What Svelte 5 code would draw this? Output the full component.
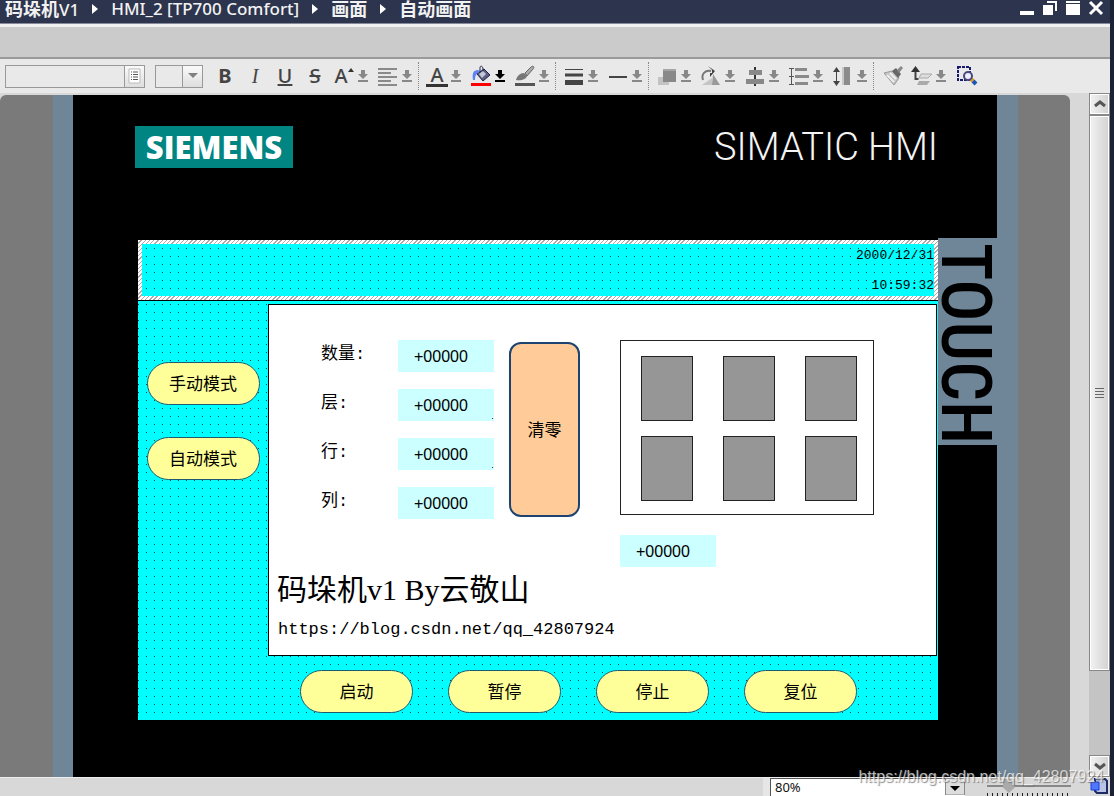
<script>
	const crumbs = [
		{ cjk: '码垛机', latin: 'V1' },
		{ cjk: '', latin: 'HMI_2 [TP700 Comfort]' },
		{ cjk: '画面', latin: '' },
		{ cjk: '自动画面', latin: '' }
	];

	const windowButtons = ['minimize', 'restore', 'maximize', 'close'];

	const tools = [
		{ id: 'bold', title: 'Bold' },
		{ id: 'italic', title: 'Italic' },
		{ id: 'underline', title: 'Underline' },
		{ id: 'strike', title: 'Strikethrough' },
		{ id: 'fontsize', title: 'Font size', menu: true },
		{ id: 'align', title: 'Align text', menu: true },
		{ id: 'sep' },
		{ id: 'color', title: 'Text color', menu: true },
		{ id: 'fill', title: 'Background color', menu: true, active: true },
		{ id: 'pen', title: 'Border color', menu: true },
		{ id: 'sep' },
		{ id: 'weight', title: 'Line width', menu: true },
		{ id: 'line', title: 'Line style', menu: true },
		{ id: 'sep' },
		{ id: 'order', title: 'Order', menu: true },
		{ id: 'rotate', title: 'Rotate', menu: true },
		{ id: 'center', title: 'Align objects', menu: true },
		{ id: 'distribute', title: 'Distribute', menu: true },
		{ id: 'resize', title: 'Same size', menu: true },
		{ id: 'sep' },
		{ id: 'format', title: 'Copy format' },
		{ id: 'layer', title: 'Layers', menu: true },
		{ id: 'zoom', title: 'Zoom selection' }
	];

	const modes = ['手动模式', '自动模式'];
	const commands = ['启动', '暂停', '停止', '复位'];

	let counters = $state([
		{ id: 'count', label: '数量:', value: '+00000' },
		{ id: 'layer', label: '层:', value: '+00000', mark: true },
		{ id: 'row', label: '行:', value: '+00000', mark: true },
		{ id: 'column', label: '列:', value: '+00000' }
	]);
	let position = $state('+00000');
	let zoom = $state('80%');
	let zoomLevel = $state(22);

	function resetCounters() {
		counters.forEach((c) => (c.value = '+00000'));
	}
</script>

<div class="window">
	<header class="titlebar">
		<nav>
			{#each crumbs as crumb, i}
				{#if i > 0}
					<svg class="chevron" width="6" height="12" viewBox="0 0 6 12"><path d="M0 1l6 5-6 5z" fill="#fff" /></svg>
				{/if}
				<a href="#top">{#if crumb.cjk}<b>{crumb.cjk}</b>{/if}{crumb.latin}</a>
			{/each}
		</nav>
		<div class="window-buttons">
			{#each windowButtons as name}
				<button type="button" aria-label={name}>
					<svg width="16" height="16" viewBox="0 0 16 16" fill="#fff">
						{#if name === 'minimize'}
							<path d="M1 11h14v4H1z" />
						{:else if name === 'restore'}
							<path d="M1 5h10v10H1zM5 1h10v10h-2V3H5z" />
						{:else if name === 'maximize'}
							<path d="M1 1h14v2H1zM1 4h14v11H1z" />
						{:else}
							<path d="M2 2l12 12M14 2L2 14" stroke="#fff" stroke-width="3" />
						{/if}
					</svg>
				</button>
			{/each}
		</div>
	</header>

	<div class="band"></div>

	<div class="toolbar">
		<div class="combo font-name">
			<input type="text" aria-label="Font" />
			<button type="button" aria-label="Choose font">
				<svg width="14" height="16" viewBox="0 0 14 16">
					<path d="M1 1h11v14H1z" fill="#fff" stroke="#bbb" />
					<path d="M3 4h1M3 6.500h1M3 9h1M3 11.500h1M5 4h5M5 6.500h5M5 9h5M5 11.500h5" stroke="#555" />
				</svg>
			</button>
		</div>
		<div class="combo font-size">
			<input type="text" aria-label="Font size" />
			<button type="button" aria-label="Choose size">
				<svg width="10" height="6" viewBox="0 0 10 6"><path d="M0 0h10L5 5z" fill="#808080" /></svg>
			</button>
		</div>

		<div class="tools">
			{#each tools as tool}
				{#if tool.id === 'sep'}
					<span class="sep"></span>
				{:else}
					<button type="button" class="tool" class:menu={tool.menu} aria-label={tool.title}>
						{#if tool.id === 'bold'}
							<span class="glyph bold">B</span>
						{:else if tool.id === 'italic'}
							<span class="glyph italic">I</span>
						{:else if tool.id === 'underline'}
							<span class="glyph underline">U</span>
						{:else if tool.id === 'strike'}
							<span class="glyph strike">S</span>
						{:else if tool.id === 'fontsize'}
							<span class="glyph">A<svg class="up" width="6" height="4" viewBox="0 0 6 4"><path d="M0 4l3-4 3 4z" fill="#333" /></svg></span>
						{:else if tool.id === 'color'}
							<span class="glyph bar">A</span>
						{:else}
							<svg width="22" height="22" viewBox="0 0 22 22" fill="none">
								{#if tool.id === 'align'}
									<path d="M1 4h19M1 8h13M1 12h19M1 16h13M1 20h19" stroke="#8a8a8a" stroke-width="2" />
								{:else if tool.id === 'fill'}
									<path d="M1 18h20v3H1z" fill="#f00" />
									<path d="M3 15C2 9 3 5 8 5l2 1c-3 2-5 4-5 9z" fill="#5b85f5" />
									<path d="M7 9l7-5 6 6-7 6z" fill="#5c5f80" stroke="#20244a" />
									<path d="M10 8V3c0-3 3-2 3 1v5" stroke="#20244a" />
									<path d="M9 9l4-3 3 3-4 4z" fill="#c5c8d8" />
								{:else if tool.id === 'pen'}
									<path d="M1 18h20v3H1z" fill="#555" />
									<path d="M2 15c1-4 4-7 8-7l3 3c-1 3-5 5-11 4z" fill="#777" />
									<path d="M11 8l6-6c2-2 4 0 2 2l-6 7z" fill="#aaa" stroke="#666" />
								{:else if tool.id === 'weight'}
									<path d="M2 4.500h18" stroke="#444" />
									<path d="M2 10h18" stroke="#444" stroke-width="3" />
									<path d="M2 17.500h18" stroke="#444" stroke-width="5" />
								{:else if tool.id === 'line'}
									<path d="M2 12h18" stroke="#444" stroke-width="2" />
								{:else if tool.id === 'order'}
									<path d="M2 12h11v8H2z" fill="#c2c2c2" />
									<path d="M7 4h13v13H7z" fill="#888" />
									<path d="M7 4h13v2H7z" fill="#a5a5a5" />
								{:else if tool.id === 'rotate'}
									<path d="M2 20l10-7v7z" fill="#c5c5c5" />
									<path d="M13 9l7 11h-8z" fill="#999" />
									<path d="M3 15C1 9 5 5 11 6" stroke="#777" stroke-width="2" />
									<path d="M8 1l7 5-5 6V8h2V5z" fill="#444" />
								{:else if tool.id === 'center'}
									<path d="M11 2v19" stroke="#333" stroke-width="2" />
									<path d="M5 5h13v5H5zM2 14h18v5H2z" fill="#888" />
								{:else if tool.id === 'distribute'}
									<path d="M3.500 3v17M1 3.500h5M1 11.500h5M1 19.500h5" stroke="#555" />
									<path d="M7 3h12v3H7zM7 10h14v3H7zM7 17h13v3H7z" fill="#8a8a8a" />
								{:else if tool.id === 'resize'}
									<path d="M4.500 5v13" stroke="#444" />
									<path d="M1 7l3.500-5L8 7zM1 16l3.500 5L8 16z" fill="#444" />
									<path d="M10 2h2v18h-2z" fill="#c8c8c8" />
									<path d="M12 2h6v18h-6z" fill="#8c8c8c" />
								{:else if tool.id === 'format'}
									<path d="M2 8l8-2 7 7-5 7z" fill="#c5c5c5" stroke="#999" />
									<path d="M5 10l7 7M8 8l6 6" stroke="#eee" stroke-width="2" />
									<path d="M10 6l4-3 5 6-3 4z" fill="#666" />
									<path d="M15 5l4-4 2 2-4 5z" fill="#888" />
								{:else if tool.id === 'layer'}
									<path d="M10 9h11l-4 4H8z" fill="#ddd" stroke="#aaa" />
									<path d="M8 16h11l-3 4H6z" fill="#aaa" />
									<path d="M4.500 5v9h3" stroke="#444" stroke-width="2" />
									<path d="M0 7l4.500-6L9 7z" fill="#333" />
								{:else}
									<path d="M2 2h12v13H2z" stroke="#191970" stroke-width="2" stroke-dasharray="3 1" />
									<path d="M15 14l2 2" stroke="#e09a20" stroke-width="4" />
									<path d="M17 16l3 3" stroke="#1c56b0" stroke-width="4" />
									<circle cx="12" cy="11" r="4" fill="#eef" stroke="#4a4a7a" stroke-width="2" />
								{/if}
							</svg>
						{/if}
						{#if tool.menu}
							<svg class="arrow" width="10" height="14" viewBox="0 0 10 14" fill={tool.active ? '#000' : '#888'}>
								<path d="M3 1h4v4h3L5 10 0 5h3zM0 11h10v2H0z" />
							</svg>
						{/if}
					</button>
				{/if}
			{/each}
		</div>
	</div>

	<main class="workspace">
		<div class="canvas">
			<div class="device">
				<div class="brand">
					<span class="siemens">SIEMENS</span>
					<span class="simatic">SIMATIC HMI</span>
				</div>

				<div class="front">
					<div class="screen">
						<div class="clock">
							<span>2000/12/31</span>
							<span>10:59:32</span>
						</div>

						<div class="middle">
							<div class="modes">
								{#each modes as mode}
									<button type="button" class="pill">{mode}</button>
								{/each}
							</div>

							<div class="panel">
								<div class="readouts">
									<div class="counters">
										{#each counters as counter}
											<div class="counter">
												<label for={counter.id}>{counter.label}</label>
												<input id={counter.id} class="io" class:mark={counter.mark} type="text" bind:value={counter.value} />
											</div>
										{/each}
									</div>

									<button type="button" class="clear" onclick={resetCounters}>清零</button>

									<div class="pallet">
										<div class="boxes">
											{#each Array(6) as _}
												<span class="box"></span>
											{/each}
										</div>
										<input class="io" type="text" aria-label="Position" bind:value={position} />
									</div>
								</div>

								<h1>码垛机v1 By云敬山</h1>
								<p>https://blog.csdn.net/qq_42807924</p>
							</div>
						</div>

						<div class="commands">
							{#each commands as command}
								<button type="button" class="pill">{command}</button>
							{/each}
						</div>
					</div>

					<div class="touch">TOUCH</div>
				</div>
			</div>
		</div>

		<div class="scrollbar">
			<button type="button" aria-label="Scroll up">
				<svg width="12" height="8" viewBox="0 0 12 8"><path d="M1 6l5-4 5 4" fill="none" stroke="#555" stroke-width="3" /></svg>
			</button>
			<div class="thumb">
				<svg width="9" height="10" viewBox="0 0 9 10"><path d="M0 .5h9M0 3.500h9M0 6.500h9M0 9.500h9" stroke="#666" /></svg>
			</div>
			<div class="track"></div>
			<button type="button" aria-label="Scroll down">
				<svg width="12" height="8" viewBox="0 0 12 8"><path d="M1 2l5 4 5-4" fill="none" stroke="#555" stroke-width="3" /></svg>
			</button>
		</div>
	</main>

	<footer class="statusbar">
		<div class="zoom">
			<select aria-label="Zoom" bind:value={zoom}>
				<option>80%</option>
				<option>100%</option>
			</select>
			<svg width="20" height="17" viewBox="0 0 20 17">
				<path d="M.5.5h19V17H.5z" fill="#ddd" stroke="#888" />
				<path d="M5 8h10l-5 5z" fill="#000" />
			</svg>
		</div>
		<div class="slider">
			<input type="range" aria-label="Zoom level" bind:value={zoomLevel} />
			<div class="ticks"></div>
		</div>
		<svg width="18" height="16" viewBox="0 0 18 16">
			<path d="M5 1h10l2 2v12H7l-2-2z" fill="#b9c3e4" stroke="#1c2a66" stroke-width="2" />
			<path d="M1 4h8v8H1z" fill="#4f78ff" stroke="#1c3fd0" />
		</svg>
	</footer>

	<span class="watermark">https://blog.csdn.net/qq_42807924</span>
</div>

<style>
	:global(body) {
		overflow-x: hidden;
	}

	.window {
		position: relative;
		box-sizing: border-box;
		display: flex;
		flex-direction: column;
		min-height: 100vh;
		border-right: 4px solid #1b2235;
		background: #d8d8d8;
		font-family: 'Liberation Sans', 'Noto Sans CJK SC', sans-serif;
	}

	button {
		padding: 0;
		border: none;
		background: none;
		font-family: inherit;
		color: inherit;
	}

	svg {
		display: block;
		flex: none;
	}

	input,
	select {
		box-sizing: border-box;
		min-width: 0;
		outline: none;
		border-radius: 0;
	}

	/* Title bar */
	.titlebar {
		display: flex;
		justify-content: space-between;
		height: 23px;
		padding: 0 6px 0 5px;
		background: #2d344d;
		border-bottom: 1px solid #85899a;
	}

	nav {
		display: flex;
		align-items: center;
		gap: 13px;
		height: 18px;
	}

	nav a {
		color: #f2f2f2;
		font-family: 'Noto Sans', 'Noto Sans CJK SC', sans-serif;
		font-size: 17px;
		font-weight: 500;
		line-height: 18px;
		text-decoration: none;
		white-space: nowrap;
	}

	nav b {
		font-size: 18px;
	}

	.window-buttons {
		display: flex;
		gap: 7px;
		height: 16px;
	}

	/* Toolbar */
	.band {
		height: 30px;
		background: #cbcbcb;
		border-top: 3px solid #f0f0f0;
		border-bottom: 2px solid #9a9a9a;
	}

	.toolbar {
		display: flex;
		align-items: center;
		height: 34px;
		padding-left: 5px;
		background: #e9e9e9;
	}

	.combo {
		box-sizing: border-box;
		display: flex;
		height: 23px;
		border: 1px solid #999;
	}

	.combo input {
		flex: 1;
		border: none;
		background: #e9e9e9;
	}

	.combo button {
		display: flex;
		align-items: center;
		justify-content: center;
		width: 20px;
		border-left: 1px solid #999;
		background: linear-gradient(#fafafa, #dedede);
	}

	.font-name {
		width: 140px;
		margin-right: 10px;
	}

	.font-size {
		width: 48px;
		margin-right: 7px;
	}

	.tools {
		display: flex;
		align-items: center;
	}

	.tool {
		display: flex;
		align-items: center;
		justify-content: center;
		width: 30px;
		height: 28px;
		color: #444;
	}

	.tool.menu {
		justify-content: flex-start;
		gap: 3px;
		width: 44px;
		padding-left: 3px;
	}

	.glyph {
		display: flex;
		justify-content: center;
		width: 22px;
		font-family: 'Noto Sans', sans-serif;
		font-size: 20px;
		font-weight: 500;
		line-height: 20px;
	}

	.bold {
		font-weight: 700;
	}

	.italic {
		font-family: 'Liberation Serif', serif;
		font-style: italic;
	}

	.underline {
		text-decoration: underline;
	}

	.strike {
		text-decoration: line-through;
	}

	.up {
		margin-top: 2px;
	}

	.bar {
		box-sizing: border-box;
		height: 22px;
		border-bottom: 3px solid #333;
	}

	.sep {
		box-sizing: border-box;
		width: 2px;
		height: 28px;
		margin-right: 3px;
		border-left: 1px dotted #888;
	}

	/* Workspace */
	.workspace {
		flex: 1;
		display: flex;
		gap: 19px;
	}

	.canvas {
		flex: 1;
		display: flex;
		margin-top: 2px;
		padding: 0 52px 0 53px;
		border-radius: 6px 6px 0 0;
		background: #7a7a7a;
	}

	.device {
		flex: 1;
		border: solid #6f8699;
		border-width: 0 21px 0 20px;
		background: #000;
	}

	.brand {
		display: flex;
		align-items: center;
		justify-content: space-between;
		height: 42px;
		padding: 31px 59px 70px 62px;
	}

	.siemens {
		width: 158px;
		background: #008583;
		color: #fff;
		font-family: 'Open Sans', 'Noto Sans', sans-serif;
		font-size: 31px;
		font-weight: 800;
		line-height: 42px;
		text-align: center;
	}

	.simatic {
		color: #f4f4f4;
		font-family: Roboto, sans-serif;
		font-size: 38px;
		font-weight: 300;
		line-height: 44px;
	}

	.front {
		display: flex;
		align-items: flex-start;
		padding-left: 65px;
	}

	.touch {
		box-sizing: border-box;
		width: 59px;
		height: 207px;
		padding-top: 5px;
		background: #6f8699;
		color: #000;
		font-family: 'Liberation Sans Narrow', 'Roboto Condensed', 'Liberation Sans', sans-serif;
		font-size: 70px;
		font-weight: 500;
		line-height: 62px;
		writing-mode: vertical-rl;
	}

	/* HMI screen */
	.screen {
		flex: 1;
		margin-top: 2px;
		background:
			conic-gradient(from 270deg at 1px 1px, #003c3c 90deg, transparent 0) 0 0 / 8px 8px,
			#0ff;
		color: #000;
	}

	.clock {
		display: flex;
		flex-direction: column;
		align-items: flex-end;
		box-sizing: border-box;
		height: 60px;
		border: 4px solid;
		border-image: repeating-linear-gradient(135deg, #fff 0 2px, #b0a8a8 2px 3px) 4;
		font-family: 'Liberation Mono', monospace;
		font-size: 13px;
		line-height: 24px;
		gap: 6px;
	}

	.middle {
		display: flex;
		padding-right: 1px;
		border-top: 1px solid #000;
	}

	.modes {
		display: flex;
		flex-direction: column;
		align-items: center;
		gap: 32px;
		width: 130px;
		padding-top: 61px;
	}

	.pill {
		width: 113px;
		height: 43px;
		padding-bottom: 2px;
		border: 1px solid #1f5a70;
		border-radius: 22px;
		background: #ff9;
		color: #000;
		font-size: 17px;
	}

	.panel {
		box-sizing: border-box;
		flex: 1;
		height: 352px;
		margin-top: 3px;
		border: 1px solid #000;
		background: #fff;
	}

	.readouts {
		display: flex;
		align-items: flex-start;
		padding: 35px 62px 0 52px;
	}

	.counters {
		display: flex;
		flex-direction: column;
		gap: 17px;
	}

	.counter {
		display: flex;
	}

	.counter label {
		width: 77px;
		font-family: 'Liberation Mono', 'Noto Sans CJK SC', sans-serif;
		font-size: 17px;
		line-height: 30px;
	}

	.io {
		width: 96px;
		height: 32px;
		padding: 2px 0 0 16px;
		border: none;
		background: #cff;
		color: #000;
		font-family: inherit;
		font-size: 16px;
	}

	.io.mark {
		background: linear-gradient(#333, #333) 94px 29px / 1px 1px no-repeat, #cff;
	}

	.clear {
		width: 71px;
		height: 175px;
		margin: 2px 40px 0 15px;
		padding-bottom: 3px;
		border: 2px solid #1d4470;
		border-radius: 12px;
		background: #fc9;
		font-size: 17px;
	}

	.pallet {
		display: flex;
		flex-direction: column;
		gap: 20px;
	}

	.boxes {
		box-sizing: border-box;
		display: grid;
		grid-template-columns: repeat(3, 52px);
		gap: 15px 30px;
		width: 254px;
		height: 175px;
		padding: 15px 16px 13px 20px;
		border: 1px solid #222;
	}

	.box {
		border: 1px solid #222;
		background: #969696;
	}

	h1 {
		margin: 3px 0 0 8px;
		font-family: 'Liberation Serif', 'Noto Sans CJK SC', serif;
		font-size: 30px;
		font-weight: 400;
		line-height: 40px;
	}

	p {
		margin: 8px 0 0 9px;
		font-family: 'Liberation Mono', monospace;
		font-size: 17px;
		line-height: 24px;
	}

	.commands {
		display: flex;
		gap: 35px;
		padding: 14px 0 7px 162px;
	}

	/* Scrollbar */
	.scrollbar {
		flex: none;
		display: flex;
		flex-direction: column;
		width: 21px;
		background: #c4c4c4;
	}

	.scrollbar button,
	.thumb {
		box-sizing: border-box;
		display: flex;
		align-items: center;
		justify-content: center;
		height: 22px;
		border: 1px solid #888;
		background: linear-gradient(90deg, #f2f2f2, #d2d2d2);
		box-shadow: inset 0 0 0 1px #fff;
	}

	.thumb {
		flex: 556;
	}

	.track {
		flex: 84;
	}

	/* Status bar */
	.statusbar {
		display: flex;
		align-items: flex-start;
		justify-content: flex-end;
		height: 18px;
		border-top: 1px solid #eee;
		padding-right: 2px;
	}

	.zoom {
		display: grid;
		width: 195px;
		border-left: 7px solid #e6e6e6;
	}

	.zoom select,
	.zoom svg {
		grid-area: 1 / 1;
	}

	.zoom select {
		height: 18px;
		padding: 0 4px;
		border: solid #555;
		border-width: 1px 0 0 1px;
		background: #fff;
		color: #111;
		appearance: none;
		font-family: 'Noto Sans', sans-serif;
		font-size: 13px;
		line-height: 17px;
	}

	.zoom svg {
		justify-self: end;
		pointer-events: none;
	}

	.slider {
		width: 84px;
		margin: 1px 19px 0 22px;
	}

	.slider input {
		display: block;
		width: 100%;
		height: 14px;
		margin: 0;
		appearance: none;
		background: linear-gradient(#888, #888) 0 6px / 100% 2px no-repeat;
	}

	.slider input::-webkit-slider-thumb {
		appearance: none;
		width: 12px;
		height: 14px;
		background: #aaa;
		clip-path: polygon(0 0, 100% 0, 100% 60%, 50% 100%, 0 60%);
	}

	.ticks {
		height: 3px;
		background: repeating-linear-gradient(90deg, #222 0 1px, transparent 1px 5px);
	}

	.watermark {
		position: absolute;
		right: 6px;
		bottom: 9px;
		color: rgba(255, 255, 255, 0.7);
		font-size: 16px;
		line-height: 20px;
		text-shadow: 1px 1px 1px rgba(90, 90, 90, 0.7);
		pointer-events: none;
	}
</style>
